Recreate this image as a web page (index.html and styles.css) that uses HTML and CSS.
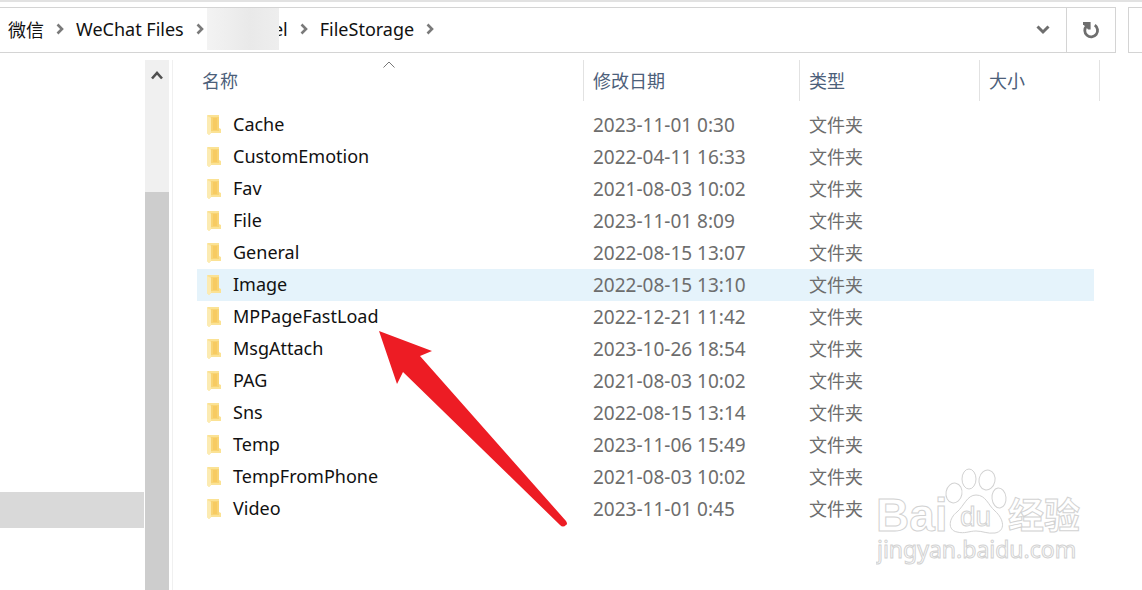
FILE: index.html
```
<!DOCTYPE html>
<html lang="zh-CN">
<head>
  <meta charset="UTF-8" />
  <meta name="viewport" content="width=device-width, initial-scale=1.0" />
  <title>FileStorage</title>
  <link rel="stylesheet" href="styles.css">
</head>
<body>
  <svg class="defs" width="0" height="0" aria-hidden="true">
    <symbol id="chevron" viewBox="0 0 8 12">
      <path d="M1.5 1.5 L6 6 L1.5 10.5" fill="none" stroke="#7a7a7a" stroke-width="2.6" />
    </symbol>
    <symbol id="folder" viewBox="0 0 16 22">
      <path d="M1 2 Q1 1 2 1 H13 V14 L15 15 V19 H5 L3 21 L1 19 Z" fill="#fbe294" />
      <path d="M5 3 H13 V17 H5 Z" fill="#f8d474" />
      <path d="M7 4 H11 V16 H7 Z" fill="#f7cb62" />
      <path d="M1 2 L5 4 V19 L3 21 L1 19 Z" fill="#fcebb2" />
    </symbol>
  </svg>

  <header class="toolbar">
    <div class="address">
      <nav class="crumbs">
        <a href="#">微信</a>
        <svg class="chevron"><use href="#chevron" /></svg>
        <a href="#">WeChat Files</a>
        <svg class="chevron"><use href="#chevron" /></svg>
        <a href="#" class="hidden-name">el</a>
        <svg class="chevron"><use href="#chevron" /></svg>
        <a href="#">FileStorage</a>
        <svg class="chevron"><use href="#chevron" /></svg>
      </nav>
      <button class="history" aria-label="历史记录">
        <svg width="14" height="10" viewBox="0 0 14 10"><path d="M1.5 1.5 L7 7 L12.5 1.5" fill="none" stroke="#6e6e6e" stroke-width="3" /></svg>
      </button>
      <button class="refresh" aria-label="刷新">
        <svg width="18" height="18" viewBox="0 0 18 18">
          <path d="M12.8 4.2 A6.4 6.4 0 1 1 4.6 5" fill="none" stroke="#6e6e6e" stroke-width="2.8" />
          <path d="M1 1 H8.6 V8.4 H6.2 L1 3.2 Z" fill="#6e6e6e" />
        </svg>
      </button>
    </div>
    <input class="search" type="text" aria-label="搜索">
  </header>

  <div class="window">
    <aside class="tree">
      <div class="tree-selected"></div>
    </aside>
    <div class="scrollbar">
      <button class="scroll-up" aria-label="向上滚动">
        <svg width="12" height="10" viewBox="0 0 12 10"><path d="M1 8.5 L6 3 L11 8.5" fill="none" stroke="#505050" stroke-width="2.6" /></svg>
      </button>
      <div class="thumb"></div>
    </div>

    <main class="files">
      <table>
        <thead>
          <tr>
            <th class="name">名称
              <svg class="sort" width="12" height="7" viewBox="0 0 12 7"><path d="M.5 6.5 L6 1 L11.5 6.5" fill="none" stroke="#777" /></svg>
            </th>
            <th class="date">修改日期</th>
            <th class="type">类型</th>
            <th class="size">大小</th>
          </tr>
        </thead>
        <tbody>
          <tr><td><svg class="folder"><use href="#folder" /></svg>Cache</td><td>2023-11-01 0:30</td><td>文件夹</td><td></td></tr>
          <tr><td><svg class="folder"><use href="#folder" /></svg>CustomEmotion</td><td>2022-04-11 16:33</td><td>文件夹</td><td></td></tr>
          <tr><td><svg class="folder"><use href="#folder" /></svg>Fav</td><td>2021-08-03 10:02</td><td>文件夹</td><td></td></tr>
          <tr><td><svg class="folder"><use href="#folder" /></svg>File</td><td>2023-11-01 8:09</td><td>文件夹</td><td></td></tr>
          <tr><td><svg class="folder"><use href="#folder" /></svg>General</td><td>2022-08-15 13:07</td><td>文件夹</td><td></td></tr>
          <tr class="hover"><td><svg class="folder"><use href="#folder" /></svg>Image</td><td>2022-08-15 13:10</td><td>文件夹</td><td></td></tr>
          <tr><td><svg class="folder"><use href="#folder" /></svg>MPPageFastLoad</td><td>2022-12-21 11:42</td><td>文件夹</td><td></td></tr>
          <tr><td><svg class="folder"><use href="#folder" /></svg>MsgAttach</td><td>2023-10-26 18:54</td><td>文件夹</td><td></td></tr>
          <tr><td><svg class="folder"><use href="#folder" /></svg>PAG</td><td>2021-08-03 10:02</td><td>文件夹</td><td></td></tr>
          <tr><td><svg class="folder"><use href="#folder" /></svg>Sns</td><td>2022-08-15 13:14</td><td>文件夹</td><td></td></tr>
          <tr><td><svg class="folder"><use href="#folder" /></svg>Temp</td><td>2023-11-06 15:49</td><td>文件夹</td><td></td></tr>
          <tr><td><svg class="folder"><use href="#folder" /></svg>TempFromPhone</td><td>2021-08-03 10:02</td><td>文件夹</td><td></td></tr>
          <tr><td><svg class="folder"><use href="#folder" /></svg>Video</td><td>2023-11-01 0:45</td><td>文件夹</td><td></td></tr>
        </tbody>
      </table>
    </main>
  </div>

  <svg class="arrow" width="190" height="196" viewBox="0 0 190 196">
    <path d="M0 0 L53 20 L41 25 L187 190 Q189 193 187 194 Q184 197 181 194 L24 41 L18 53 Z" fill="#ed1c24" />
  </svg>

  <svg class="watermark" width="216" height="106" viewBox="0 0 216 106">
    <g fill="#fff" stroke="#d2d2d2">
      <text class="logo" x="0" y="64">Bai</text>
      <ellipse cx="78" cy="26" rx="8" ry="10" transform="rotate(10 78 26)" />
      <ellipse cx="93" cy="12" rx="7" ry="10" />
      <ellipse cx="111" cy="13" rx="8" ry="10" transform="rotate(12 111 13)" />
      <ellipse cx="123" cy="31" rx="7" ry="10" transform="rotate(-6 123 31)" />
      <path d="M100 28 C110 28 112 38 119 44 C128 52 130 64 119 66 C111 67 107 64 100 64 C93 64 89 67 81 65 C71 63 73 51 81 45 C88 39 91 28 100 28 Z" />
      <text class="du" x="84" y="59">du</text>
      <text class="jingyan" x="132" y="62">经验</text>
      <text class="url" x="1" y="91">jingyan.baidu.com</text>
    </g>
  </svg>
</body>
</html>
```

FILE: styles.css
```
* {
  box-sizing: border-box;
}

body {
  margin: 0;
  min-height: 100vh;
  display: flex;
  flex-direction: column;
  overflow: hidden;
  position: relative;
  background: #fff;
  color: #111;
  font-family: "Noto Sans", "Noto Sans CJK SC", sans-serif;
  font-size: 18px;
}

button {
  padding: 0;
  border: none;
  background: transparent;
  display: flex;
  align-items: center;
  justify-content: center;
}

.defs {
  position: absolute;
}

.toolbar {
  display: flex;
  gap: 12px;
  height: 53px;
  padding-top: 5px;
  border-top: 2px solid #e2e2e2;
}

.address {
  flex: 1;
  display: flex;
  border: 1px solid #d4d4d4;
  border-left: none;
}

.crumbs {
  flex: 1;
  display: flex;
  align-items: center;
  gap: 12px;
  padding: 0 0 2px 8px;
}

.crumbs a {
  color: #111;
  text-decoration: none;
  white-space: nowrap;
}

.chevron {
  width: 8px;
  height: 12px;
}

.crumbs .hidden-name {
  width: 72px;
  text-align: right;
  position: relative;
}

.hidden-name::before {
  content: '';
  position: absolute;
  left: -9px;
  top: -9px;
  width: 72px;
  height: 42px;
  background: linear-gradient(to right, #f3f3f3, #e9e9e9 60%, #eee);
}

.history {
  width: 46px;
}

.refresh {
  width: 49px;
  border-left: 1px solid #d4d4d4;
}

.search {
  width: 14px;
  border: 1px solid #d4d4d4;
  border-right: none;
  background: #fff;
}

.window {
  flex: 1;
  display: flex;
  padding-top: 7px;
}

.tree {
  width: 145px;
  padding-top: 432px;
}

.tree-selected {
  height: 36px;
  margin-right: 1px;
  background: #d9d9d9;
}

.scrollbar {
  width: 24px;
  display: flex;
  flex-direction: column;
  background: #f0f0f0;
}

.scroll-up {
  height: 30px;
}

.thumb {
  flex: 1;
  margin-top: 102px;
  background: #cdcdcd;
}

.files {
  flex: 1;
  margin-left: 3px;
  padding-left: 24px;
  border-left: 1px solid #f0f0f0;
}

table {
  width: 903px;
  table-layout: fixed;
  border-spacing: 0;
}

th {
  height: 41px;
  padding: 0 0 2px 9px;
  border-right: 1px solid #e2e2e2;
  color: #4c607a;
  font-weight: normal;
  text-align: left;
  position: relative;
}

.name {
  width: 387px;
  padding-left: 5px;
}

.date {
  width: 216px;
}

.type {
  width: 180px;
}

.size {
  width: 120px;
}

.sort {
  position: absolute;
  left: 186px;
  top: 1px;
}

tbody::before {
  content: '';
  display: block;
  height: 8px;
}

td {
  height: 32px;
  padding: 0 0 0 9px;
  color: #6d6d6d;
  line-height: 24px;
  white-space: nowrap;
}

td:first-child {
  color: #111;
}

td:nth-child(2) {
  font-size: 19px;
}

td:last-child {
  border-right: 6px solid #fff;
}

.hover td {
  background: #e5f3fb;
}

.folder {
  width: 16px;
  height: 22px;
  margin: 0 11px 2px 0;
  vertical-align: middle;
}

.arrow {
  position: absolute;
  left: 379px;
  top: 331px;
}

.watermark {
  position: absolute;
  right: 50px;
  bottom: 17px;
}

.watermark text {
  font-family: "Liberation Sans", "Noto Sans CJK SC", sans-serif;
  font-weight: bold;
}

.logo {
  font-size: 46px;
}

.watermark .du {
  font-size: 28px;
  font-weight: normal;
}

.jingyan {
  font-size: 36px;
}

.watermark .url {
  font-family: "Noto Sans", sans-serif;
  font-size: 23px;
  font-weight: normal;
}
```
